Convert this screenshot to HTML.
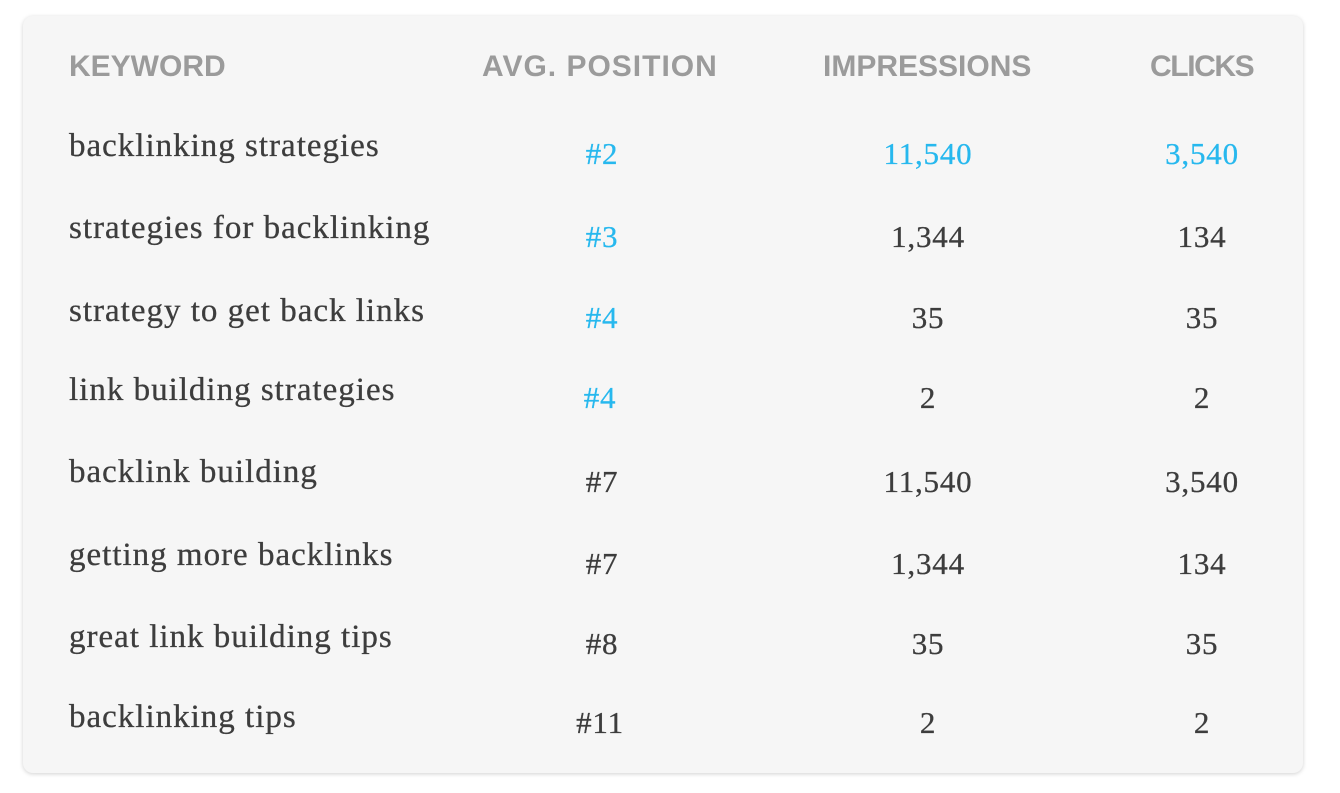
<!DOCTYPE html>
<html><head><meta charset="utf-8"><style>
body{margin:0;width:1340px;height:793px;background:#fff;position:relative;overflow:hidden}
.card{position:absolute;left:23px;top:16px;width:1280px;height:757px;background:#f6f6f6;border-radius:10px;box-shadow:0 1px 4px rgba(0,0,0,.18)}
.h{position:absolute;font-family:"Liberation Sans",sans-serif;font-weight:bold;font-size:30px;color:#9b9b9b;line-height:1;top:52px;white-space:nowrap}
.k{position:absolute;left:69px;font-family:"Liberation Serif",serif;font-size:33px;letter-spacing:1px;color:#3d3d3d;line-height:1;white-space:nowrap;-webkit-text-stroke:0.3px #3d3d3d}
.n{position:absolute;font-family:"Liberation Serif",serif;font-size:31px;letter-spacing:0.8px;color:#3d3d3d;line-height:1;white-space:nowrap;transform:translateX(-50%);-webkit-text-stroke:0.3px currentColor}
.b{color:#27b8ee}
</style></head><body>
<div class="card"></div>
<div class="h" style="left:69px">KEYWORD</div>
<div class="h" style="left:482px;letter-spacing:1px">AVG. POSITION</div>
<div class="h" style="left:823px">IMPRESSIONS</div>
<div class="h" style="left:1150px;letter-spacing:-1.4px">CLICKS</div>

<div class="k" style="top:130px">backlinking strategies</div>
<div class="k" style="top:212px">strategies for backlinking</div>
<div class="k" style="top:295px">strategy to get back links</div>
<div class="k" style="top:374px">link building strategies</div>
<div class="k" style="top:456px">backlink building</div>
<div class="k" style="top:539px">getting more backlinks</div>
<div class="k" style="top:621px">great link building tips</div>
<div class="k" style="top:701px">backlinking tips</div>

<div class="n b" style="left:602px;top:138px">#2</div>
<div class="n b" style="left:928px;top:138px">11,540</div>
<div class="n b" style="left:1202px;top:138px">3,540</div>

<div class="n b" style="left:602px;top:221px">#3</div>
<div class="n" style="left:928px;top:221px">1,344</div>
<div class="n" style="left:1202px;top:221px">134</div>

<div class="n b" style="left:602px;top:302px">#4</div>
<div class="n" style="left:928px;top:302px">35</div>
<div class="n" style="left:1202px;top:302px">35</div>

<div class="n b" style="left:600px;top:382px">#4</div>
<div class="n" style="left:928px;top:382px">2</div>
<div class="n" style="left:1202px;top:382px">2</div>

<div class="n" style="left:602px;top:466px">#7</div>
<div class="n" style="left:928px;top:466px">11,540</div>
<div class="n" style="left:1202px;top:466px">3,540</div>

<div class="n" style="left:602px;top:548px">#7</div>
<div class="n" style="left:928px;top:548px">1,344</div>
<div class="n" style="left:1202px;top:548px">134</div>

<div class="n" style="left:602px;top:628px">#8</div>
<div class="n" style="left:928px;top:628px">35</div>
<div class="n" style="left:1202px;top:628px">35</div>

<div class="n" style="left:600px;top:707px">#11</div>
<div class="n" style="left:928px;top:707px">2</div>
<div class="n" style="left:1202px;top:707px">2</div>
</body></html>
